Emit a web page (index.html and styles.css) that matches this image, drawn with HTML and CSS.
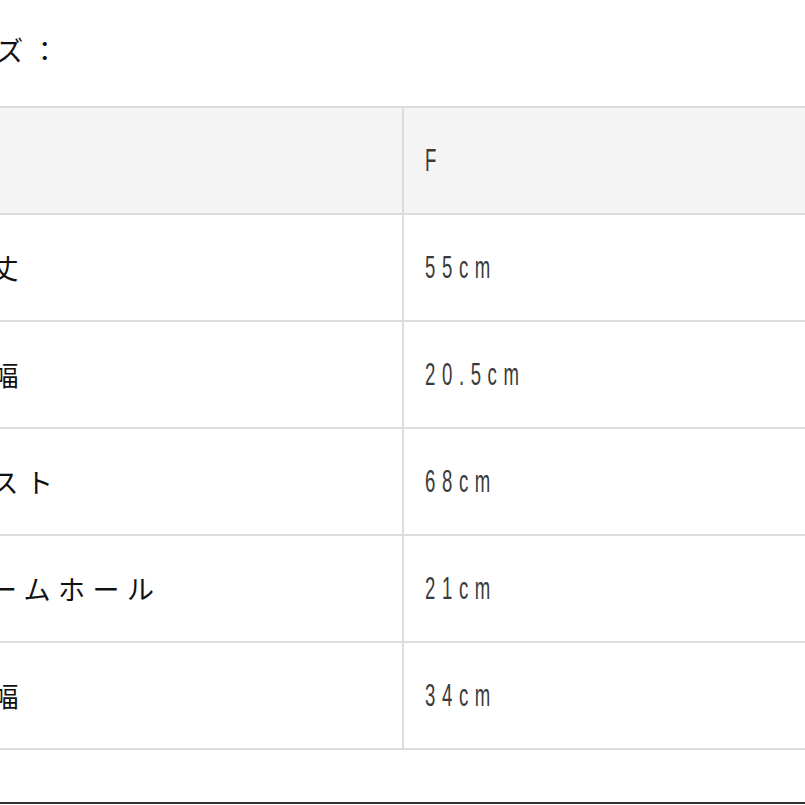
FILE: index.html
```html
<!DOCTYPE html>
<html lang="ja">
<head>
<meta charset="utf-8">
<link rel="stylesheet" href="styles.css">
</head>
<body>
<div class="page">
  <p class="title">サイズ：</p>
  <table class="size-table">
    <colgroup><col class="col-label"><col class="col-value"></colgroup>
    <tr class="head"><th></th><th><span class="num">F</span></th></tr>
    <tr><td>着丈</td><td><span class="num">55cm</span></td></tr>
    <tr><td>肩幅</td><td><span class="num">20.5cm</span></td></tr>
    <tr><td>バスト</td><td><span class="num">68cm</span></td></tr>
    <tr><td>アームホール</td><td><span class="num">21cm</span></td></tr>
    <tr><td>裾幅</td><td><span class="num">34cm</span></td></tr>
  </table>
  <div class="rule"></div>
</div>
</body>
</html>
```
FILE: styles.css
```css
html, body {
  margin: 0;
  padding: 0;
  overflow: hidden;
  background: #fff;
}
.page {
  width: 1400px;
  margin-left: -66px;
  padding-top: 30px;
  font-family: "Noto Sans CJK JP", "Noto Sans", sans-serif;
  color: #111;
}
.title {
  margin: 0 0 36px -7px;
  font-size: 27px;
  line-height: 40px;
  letter-spacing: 8px;
}
.size-table {
  border-collapse: collapse;
  table-layout: fixed;
  width: 1300px;
}
.col-label { width: 468px; }
.col-value { width: 832px; }
.size-table th,
.size-table td {
  border: 2px solid #dcdcdc;
  height: 105px;
  padding: 0 0 0 21px;
  text-align: left;
  vertical-align: middle;
  font-weight: normal;
  font-size: 27px;
  letter-spacing: 7.5px;
  line-height: 40px;
}
.head th {
  background: #f4f4f4;
}
.num {
  display: inline-block;
  font-family: "Liberation Sans", sans-serif;
  font-size: 31px;
  letter-spacing: 11px;
  color: #3a3a3a;
  transform: scaleX(0.6);
  transform-origin: left center;
}
.rule {
  width: 1400px;
  height: 2px;
  margin-top: 52px;
  background: #333;
}
```
